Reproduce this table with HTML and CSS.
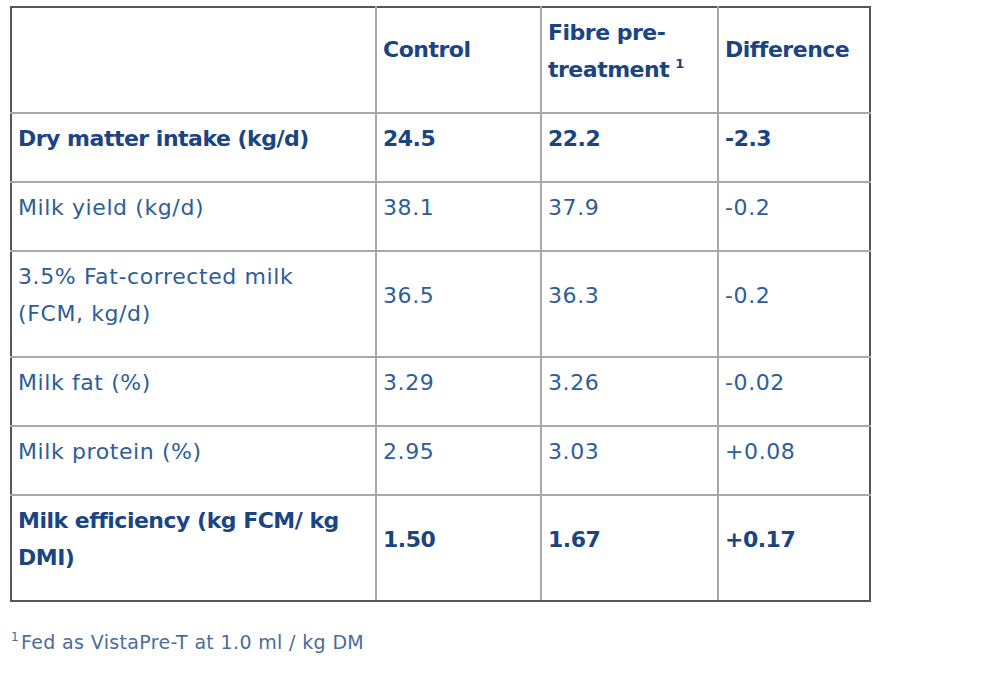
FILE: index.html
```html
<!DOCTYPE html>
<html lang="en">
<head>
<meta charset="utf-8">
<title>Fibre pre-treatment results</title>
<link rel="stylesheet" href="styles.css">
</head>
<body>
<div class="wrap">
  <table class="results">
    <colgroup>
      <col class="c1"><col class="c2"><col class="c3"><col class="c4">
    </colgroup>
    <tr class="head">
      <th></th>
      <th>Control</th>
      <th>Fibre pre-treatment<sup>1</sup></th>
      <th>Difference</th>
    </tr>
    <tr class="strong">
      <td>Dry matter intake (kg/d)</td><td>24.5</td><td>22.2</td><td>-2.3</td>
    </tr>
    <tr>
      <td>Milk yield (kg/d)</td><td>38.1</td><td>37.9</td><td>-0.2</td>
    </tr>
    <tr>
      <td>3.5% Fat-corrected milk (FCM, kg/d)</td><td>36.5</td><td>36.3</td><td>-0.2</td>
    </tr>
    <tr>
      <td>Milk fat (%)</td><td>3.29</td><td>3.26</td><td>-0.02</td>
    </tr>
    <tr>
      <td>Milk protein (%)</td><td>2.95</td><td>3.03</td><td>+0.08</td>
    </tr>
    <tr class="strong">
      <td>Milk efficiency (kg FCM/ kg DMI)</td><td>1.50</td><td>1.67</td><td>+0.17</td>
    </tr>
  </table>
  <p class="note"><sup>1</sup>Fed as VistaPre-T at 1.0 ml / kg DM</p>
</div>
</body>
</html>
```

FILE: styles.css
```css
html, body {
  margin: 0;
  padding: 0;
  background: #ffffff;
}

.wrap {
  padding: 6px 0 0 10px;
  font-family: "DejaVu Sans", "Open Sans", sans-serif;
}

.results {
  border-collapse: collapse;
  width: 859px;
  table-layout: fixed;
  border: 2px solid #565656;
}

.c1 { width: 365px; }
.c2 { width: 165px; }
.c3 { width: 177px; }
.c4 { width: 152px; }

.results th,
.results td {
  border: 2px solid #a8a8a8;
  padding: 6px 8px 24px 6px;
  vertical-align: middle;
  text-align: left;
  font-size: 22px;
  line-height: 37px;
  letter-spacing: 0.6px;
  color: #2d5d9a;
  font-weight: 400;
}

.results tr > :first-child {
  padding-right: 16px;
}

.results th,
.results .strong td {
  color: #1b4582;
  font-weight: 700;
  letter-spacing: -0.5px;
}

.results .head th:nth-child(2),
.results .head th:nth-child(4) {
  padding-top: 4px;
  padding-bottom: 26px;
}

.results tr > :first-child { border-left-color: #565656; }
.results tr > :last-child { border-right-color: #565656; }
.results tr:first-child > * { border-top-color: #565656; }
.results tr:last-child > * { border-bottom-color: #565656; }

.results sup {
  font-size: 13px;
  line-height: 0;
  vertical-align: 9px;
  margin-left: 6px;
}

.note {
  margin: 22px 0 0 1px;
  font-size: 19px;
  line-height: 37px;
  color: #4a6d9b;
  letter-spacing: 0.35px;
}

.note sup {
  font-size: 12px;
  line-height: 0;
  vertical-align: 8px;
  margin-right: 2px;
  margin-left: 0;
}
```
